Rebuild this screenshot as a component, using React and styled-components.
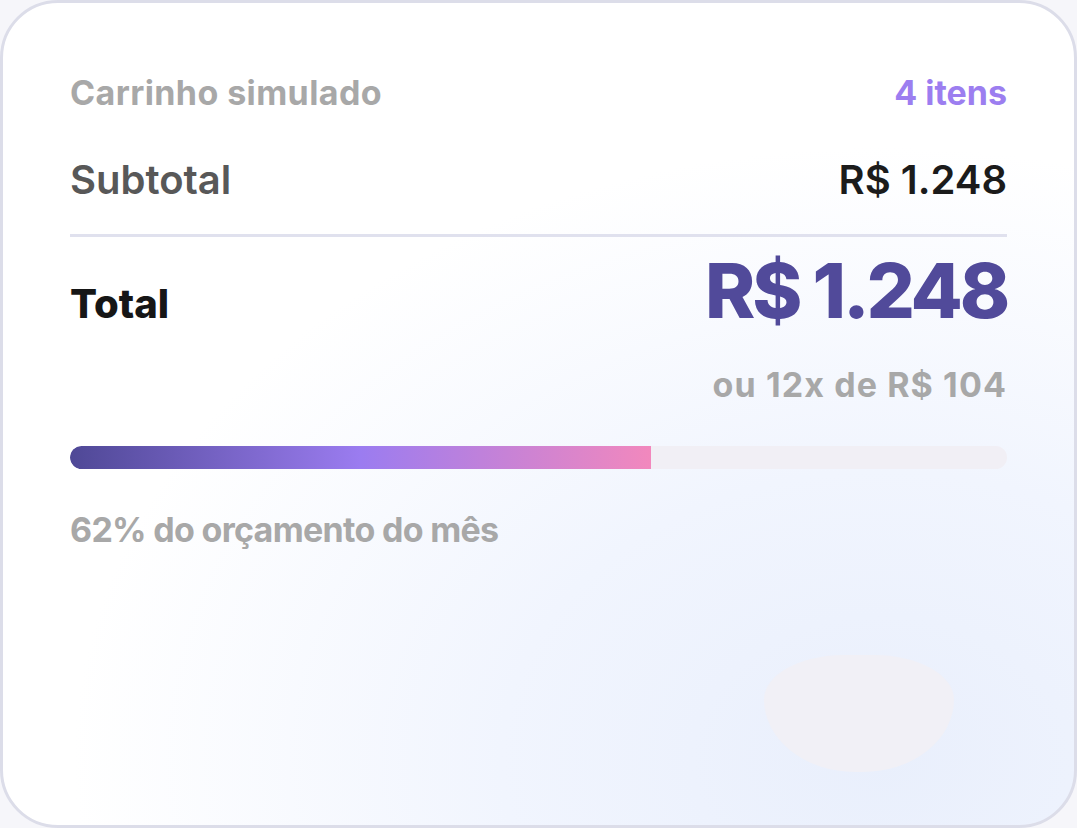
import React from "react";
import styled, { createGlobalStyle } from "styled-components";

const Global = createGlobalStyle`
  html, body { margin: 0; padding: 0; background: #f6f6fa; }
  body { font-family: "Inter", "Noto Sans", sans-serif; }
  * { box-sizing: border-box; }
`;

const Card = styled.div`
  position: relative;
  width: 1077px;
  height: 828px;
  border: 3px solid #dcdde9;
  border-radius: 58px;
  overflow: hidden;
  background:
    radial-gradient(ellipse 950px 720px at 82% 92%, #e9effc 0%, #f1f5fe 40%, rgba(255,255,255,0) 85%),
    #ffffff;
  padding: 73px 67px 0 67px;
  display: flex;
  flex-direction: column;
`;

const Row = styled.div`
  display: flex;
  justify-content: space-between;
  align-items: baseline;
  margin-top: ${(p) => p.$mt || 0}px;
`;

const Label = styled.span`
  font-size: ${(p) => p.$size}px;
  font-weight: ${(p) => p.$weight || 700};
  color: ${(p) => p.$color};
  line-height: 1;
  letter-spacing: ${(p) => p.$ls || 0}px;
  white-space: nowrap;
`;

const Divider = styled.div`
  height: 3px;
  background: #e0e1ee;
  margin-top: 34px;
`;

const Right = styled.div`
  display: flex;
  justify-content: flex-end;
  margin-top: ${(p) => p.$mt || 0}px;
`;

const Track = styled.div`
  height: 23px;
  border-radius: 12px;
  background: #f1eff5;
  margin-top: 44px;
  overflow: hidden;
`;

const Fill = styled.div`
  height: 100%;
  border-radius: 12px 0 0 12px;
  background: linear-gradient(90deg, #4f4896 0%, #9b7cf0 50%, #f288bd 100%);
`;

const Blob = styled.div`
  position: absolute;
  left: 761px;
  top: 652px;
  width: 190px;
  height: 117px;
  border-radius: 42% 42% 48% 48% / 38% 38% 62% 62%;
  background: #f1f0f6;
`;

export default function App() {
  const pct = 62;
  return (
    <>
      <Global />
      <Card>
        <Row>
          <Label $size={34} $color="#a8a8a8" $ls={0.4}>Carrinho simulado</Label>
          <Label $size={34} $color="#9c7ef0">4 itens</Label>
        </Row>
        <Row $mt={50}>
          <Label $size={40} $weight={600} $color="#585858">Subtotal</Label>
          <Label $size={40} $weight={600} $color="#1b1b1b">R$ 1.248</Label>
        </Row>
        <Divider />
        <Row $mt={15}>
          <Label $size={40} $weight={800} $color="#161616">Total</Label>
          <Label $size={76} $weight={800} $color="#514a9a" $ls={-3.2}>R$ 1.248</Label>
        </Row>
        <Right $mt={40}>
          <Label $size={34} $color="#a8a8a8" $ls={1.1}>ou 12x de R$ 104</Label>
        </Right>
        <Track>
          <Fill style={{ width: `${pct}%` }} />
        </Track>
        <Row $mt={44}>
          <Label $size={34} $color="#a8a8a8" $ls={-0.7}>62% do orçamento do mês</Label>
        </Row>
        <Blob />
      </Card>
    </>
  );
}
